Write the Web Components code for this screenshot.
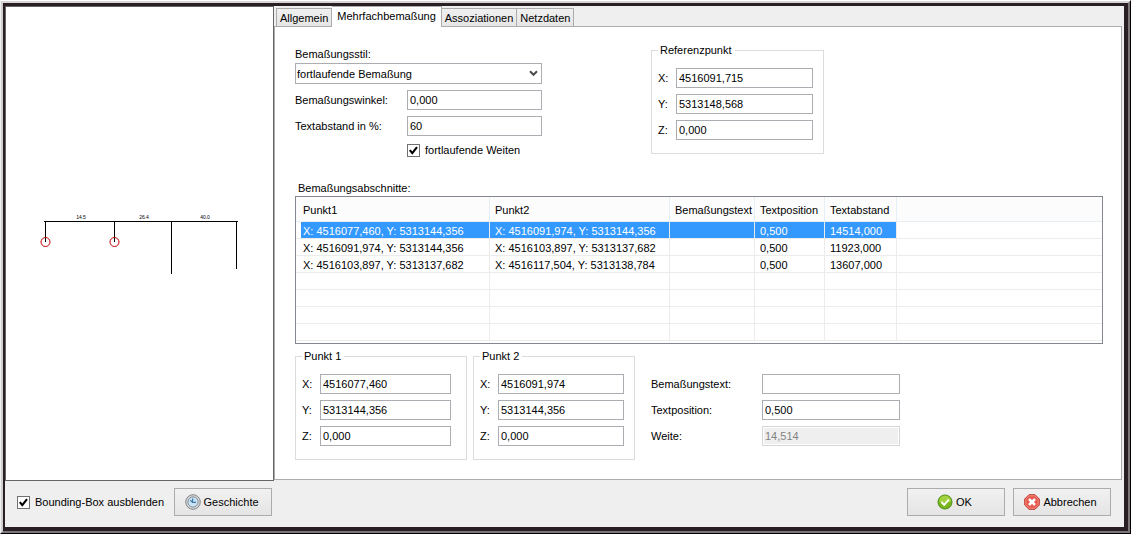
<!DOCTYPE html>
<html lang="de">
<head>
<meta charset="utf-8">
<title>Mehrfachbemaßung</title>
<style>
  html, body { margin: 0; }
  body {
    font: 11px/16px "Liberation Sans", Arial, sans-serif;
    color: #000;
    background: #fff;
    --face: #efefef;
    --line: #abadb3;
    --label: 18px;
    --inset: 10px;
    --gap: 8px;
  }
</style>
</head>
<body>
<dialog-window>
  <preview-pane slot="preview"></preview-pane>
  <tab-control slot="tabs"><dimension-page></dimension-page></tab-control>
  <check-field slot="left" label="Bounding-Box ausblenden"></check-field>
  <icon-button slot="left" icon="clock">Geschichte</icon-button>
  <icon-button slot="right" icon="ok">OK</icon-button>
  <icon-button slot="right" icon="cancel">Abbrechen</icon-button>
</dialog-window>

<script>
const define = (name, html, setup) => {
  const template = document.createElement('template');
  template.innerHTML = html;
  customElements.define(name, class extends HTMLElement {
    constructor() {
      super();
      this.attachShadow({ mode: 'open' });
    }
    connectedCallback() {
      if (this.shadowRoot.firstChild) return;
      this.shadowRoot.append(template.content.cloneNode(true));
      if (setup) setup(this, this.shadowRoot);
    }
  });
};

define('text-field', `
  <style>
    :host { display: block; }
    .row { display: grid; grid-template-columns: var(--label) minmax(0, 1fr); align-items: center; }
    input {
      box-sizing: border-box; width: 100%; height: 20px; margin: 0; padding: 0 2px;
      border: 1px solid var(--line); border-radius: 0; background: #fff;
      font: inherit; color: inherit;
    }
    input:disabled { border-color: #d6d6d6; background: #efefef; color: #838383; box-shadow: inset 0 0 0 1px #fff; }
  </style>
  <div class="row"><label for="field"></label><input id="field" type="text"></div>`,
  (host, root) => {
    root.querySelector('label').textContent = host.getAttribute('label');
    const input = root.querySelector('input');
    input.value = host.getAttribute('value') || '';
    input.disabled = host.hasAttribute('disabled');
  });

define('select-field', `
  <style>
    :host { display: block; }
    label { display: block; line-height: 18px; }
    .box { display: grid; align-items: center; }
    .box > * { grid-area: 1 / 1; }
    select {
      appearance: none; box-sizing: border-box; width: 100%; height: 21px; margin: 0; padding: 0 20px 0 1px;
      border: 1px solid var(--line); border-radius: 0; background: #fff; font: inherit; color: inherit;
    }
    svg { justify-self: end; margin-right: 4px; pointer-events: none; }
  </style>
  <label for="choice"></label>
  <div class="box">
    <select id="choice"><option>fortlaufende Bemaßung</option></select>
    <svg width="9" height="7" viewBox="0 0 9 7"><path d="M1 1.2 4.5 4.8 8 1.2" fill="none" stroke="#4c4c4c" stroke-width="2"/></svg>
  </div>`,
  (host, root) => { root.querySelector('label').textContent = host.getAttribute('label'); });

define('check-field', `
  <style>
    :host { display: block; }
    .row { display: flex; align-items: center; gap: 5px; }
    .box { display: grid; }
    .box > * { grid-area: 1 / 1; }
    input { appearance: none; box-sizing: border-box; width: 13px; height: 13px; margin: 0; border: 1px solid #707070; background: #fff; }
    svg { pointer-events: none; visibility: hidden; }
    input:checked + svg { visibility: visible; }
  </style>
  <div class="row">
    <span class="box"><input id="check" type="checkbox" checked>
      <svg width="13" height="13" viewBox="0 0 13 13"><path d="M2.8 6.2 5.3 9.2 10 3.2" fill="none" stroke="#000" stroke-width="2.1"/></svg></span>
    <label for="check"></label>
  </div>`,
  (host, root) => { root.querySelector('label').textContent = host.getAttribute('label'); });

define('group-box', `
  <style>
    :host { display: block; }
    fieldset { box-sizing: border-box; min-width: 0; height: 100%; margin: 0; padding: 10px var(--inset) 13px 6px; border: 1px solid #dcdcdc; }
    legend { margin: 0; padding: 0 3px 0 2px; line-height: 16px; }
    .stack { display: grid; gap: 6px; }
  </style>
  <fieldset><legend></legend><div class="stack"><slot></slot></div></fieldset>`,
  (host, root) => { root.querySelector('legend').textContent = host.getAttribute('label'); });

define('icon-button', `
  <style>
    :host { display: block; }
    button {
      box-sizing: border-box; width: 98px; height: 28px; margin: 0; padding: 0 3px 0 0;
      display: flex; align-items: center; justify-content: center; gap: 3px;
      border: 1px solid #acacac; border-radius: 0;
      background: linear-gradient(#f1f1f1, #e4e4e4); font: inherit; color: inherit;
    }
  </style>
  <button type="button"><svg width="16" height="16" viewBox="0 0 16 16"></svg><slot></slot></button>`,
  (host, root) => {
    const icons = {
      clock: `<circle cx="8" cy="8" r="7.3" fill="#d2d4d6" stroke="#85898d"/>
        <circle cx="8" cy="8" r="5.1" fill="#c9e2f4" stroke="#8b9299"/>
        <path d="M7.6 4.6V8.4H11M7.6 8.4 5.2 6.2" fill="none" stroke="#3f7ba8" stroke-width="1.2"/>`,
      ok: `<circle cx="8" cy="8" r="7" fill="#79b51c" stroke="#4d8a12"/>
        <path d="M2 7.5a6 6 0 0 1 12 0q-6 2.500-12 0z" fill="#a2d23f"/>
        <path d="M4.300 8 7.200 10.800 11.800 5.700" fill="none" stroke="#fff" stroke-width="2"/>`,
      cancel: `<path d="M5 .700H11L15.300 5V11L11 15.300H5L.700 11V5z" fill="#e8584c" stroke="#c23a32"/>
        <path d="M5.300 1.800H10.700L14.200 5.300V10.700L10.700 14.200H5.300L1.800 10.700V5.300z" fill="none" stroke="#f39a90" stroke-width=".8"/>
        <path d="M5 5 11 11M11 5 5 11" stroke="#fff" stroke-width="2.600"/>`
    };
    root.querySelector('svg').innerHTML = icons[host.getAttribute('icon')];
  });

define('preview-pane', `
  <style>
    :host { display: flex; align-items: center; justify-content: center; box-sizing: border-box; border: 1px solid #666; background: #fff; }
    text { font: 5px "Liberation Sans", Arial, sans-serif; text-anchor: middle; }
  </style>
  <svg width="200" height="64" viewBox="0 0 200 64" role="img" aria-label="Vorschau">
    <g stroke="#000" fill="none" shape-rendering="crispEdges">
      <path d="M4 9.500H198M5.500 9V30M74.500 9V30M131.500 9V62M196.500 9V57"/>
    </g>
    <g stroke="#c00000" fill="none"><circle cx="5.500" cy="30" r="4.500"/><circle cx="74.500" cy="30" r="4.500"/></g>
    <text x="41" y="7">14.5</text><text x="104" y="7">26.4</text><text x="165" y="7">40.0</text>
  </svg>`);

define('section-table', `
  <style>
    :host { display: block; box-sizing: border-box; border: 1px solid #828790; padding-bottom: 2px; background: #fff; }
    table { width: 100%; table-layout: fixed; border-collapse: separate; border-spacing: 0; }
    .c1 { width: 194px; } .c2 { width: 180px; } .c3 { width: 85px; } .c4 { width: 70px; } .c5 { width: 72px; }
    th, td { box-sizing: border-box; padding: 0 0 0 5px; border: 0 solid #ececec; border-width: 0 1px 1px 0; text-align: left; font-weight: normal; white-space: nowrap; overflow: hidden; }
    th { height: 25px; padding-top: 2px; background: #fcfcfc; border-color: #e5eff5; }
    td { height: 17px; padding-top: 2px; line-height: 14px; }
    th:first-child, td:first-child { padding-left: 7px; }
    th:last-child, td:last-child { border-right: 0; }
    .selected td:not(:last-child) { background: #39f; background-clip: padding-box; color: #fff; }
    .selected td:first-child:not(:last-child) { background: linear-gradient(90deg, #fff 5px, #39f 5px) padding-box; }
  </style>
  <table>
    <colgroup><col class="c1"><col class="c2"><col class="c3"><col class="c4"><col class="c5"><col></colgroup>
    <thead><tr><th>Punkt1</th><th>Punkt2</th><th>Bemaßungstext</th><th>Textposition</th><th>Textabstand</th><th></th></tr></thead>
    <tbody></tbody>
  </table>`,
  (host, root) => {
    const rows = [
      ['X: 4516077,460, Y: 5313144,356', 'X: 4516091,974, Y: 5313144,356', '', '0,500', '14514,000', ''],
      ['X: 4516091,974, Y: 5313144,356', 'X: 4516103,897, Y: 5313137,682', '', '0,500', '11923,000', ''],
      ['X: 4516103,897, Y: 5313137,682', 'X: 4516117,504, Y: 5313138,784', '', '0,500', '13607,000', '']
    ];
    while (rows.length < 7) rows.push(Array(6).fill(''));
    const body = root.querySelector('tbody');
    rows.forEach((cells, index) => {
      const tr = body.insertRow();
      if (index === 0) tr.className = 'selected';
      cells.forEach(text => { tr.insertCell().textContent = text; });
    });
  });

define('dimension-page', `
  <style>
    :host { display: block; padding: 15px 18px 19px 20px; }
    .top { display: grid; grid-template-columns: 249px 173px; column-gap: 107px; align-items: start; }
    .style { padding-top: 3px; }
    select-field { width: 247px; margin-bottom: 6px; }
    .fields { display: grid; gap: 6px; --label: 112px; }
    .fields text-field { width: 247px; }
    .fields check-field { padding-left: 112px; }
    .caption { padding: 0 3px; margin-top: 22px; }
    .bottom { display: grid; grid-template-columns: 172px 162px 259px; column-gap: 6px; margin-top: 4px; }
    .wide { --inset: 15px; }
    .details { display: grid; gap: 6px; align-content: start; padding: 26px 0 0 10px; --label: 111px; }
  </style>
  <div class="top">
    <div class="style">
      <select-field label="Bemaßungsstil:"></select-field>
      <div class="fields">
        <text-field label="Bemaßungswinkel:" value="0,000"></text-field>
        <text-field label="Textabstand in %:" value="60"></text-field>
        <check-field label="fortlaufende Weiten"></check-field>
      </div>
    </div>
    <group-box label="Referenzpunkt">
      <text-field label="X:" value="4516091,715"></text-field>
      <text-field label="Y:" value="5313148,568"></text-field>
      <text-field label="Z:" value="0,000"></text-field>
    </group-box>
  </div>
  <div class="caption">Bemaßungsabschnitte:</div>
  <section-table></section-table>
  <div class="bottom">
    <group-box class="wide" label="Punkt 1">
      <text-field label="X:" value="4516077,460"></text-field>
      <text-field label="Y:" value="5313144,356"></text-field>
      <text-field label="Z:" value="0,000"></text-field>
    </group-box>
    <group-box label="Punkt 2">
      <text-field label="X:" value="4516091,974"></text-field>
      <text-field label="Y:" value="5313144,356"></text-field>
      <text-field label="Z:" value="0,000"></text-field>
    </group-box>
    <div class="details">
      <text-field label="Bemaßungstext:" value=""></text-field>
      <text-field label="Textposition:" value="0,500"></text-field>
      <text-field label="Weite:" value="14,514" disabled></text-field>
    </div>
  </div>`);

define('tab-control', `
  <style>
    :host { display: flex; flex-direction: column; min-width: 0; background: var(--face); }
    .tabs { display: flex; align-items: flex-end; height: 20px; padding-left: 2px; }
    button {
      box-sizing: border-box; height: 18px; margin: 0; padding: 0 3px; font: inherit; color: inherit; white-space: nowrap;
      border: 1px solid #acacac; border-bottom: 0; border-radius: 0; background: linear-gradient(#f0f0f0, #e6e6e6);
    }
    button + button { border-left: 0; }
    button[aria-selected="true"] { position: relative; height: 21px; margin-bottom: -1px; padding: 0 5px 2px; background: #fff; }
    .page { flex: 1; box-sizing: border-box; margin-right: 2px; border: 1px solid #acacac; background: #fff; }
  </style>
  <div class="tabs" role="tablist">
    <button type="button" role="tab" aria-selected="false">Allgemein</button>
    <button type="button" role="tab" aria-selected="true">Mehrfachbemaßung</button>
    <button type="button" role="tab" aria-selected="false">Assoziationen</button>
    <button type="button" role="tab" aria-selected="false">Netzdaten</button>
  </div>
  <div class="page" role="tabpanel"><slot></slot></div>`);

define('dialog-window', `
  <style>
    :host { display: flex; box-sizing: border-box; min-height: 100vh; border: 1px solid; border-color: #fff #000 #000 #f0f0f0; }
    .bevel { flex: 1; min-width: 0; display: flex; border: 2px solid; border-color: #d6d6d6 #7c757a #7c757a #d0d0d0; }
    .frame { flex: 1; min-width: 0; display: flex; flex-direction: column; border: solid #281e23; border-width: 3px 4px 4px 2px; background: var(--face); }
    .main { flex: 1; display: grid; grid-template-columns: 269px minmax(0, 1fr); }
    .main slot[name="tabs"]::slotted(*) { margin-bottom: 1px; }
    footer { display: flex; justify-content: space-between; align-items: flex-start; padding: 7px 13px 11px 12px; }
    .group { display: flex; align-items: center; gap: var(--gap); }
    .first { gap: 10px; }
  </style>
  <div class="bevel"><div class="frame">
    <div class="main"><slot name="preview"></slot><slot name="tabs"></slot></div>
    <footer><div class="group first"><slot name="left"></slot></div><div class="group"><slot name="right"></slot></div></footer>
  </div></div>`);
</script>
</body>
</html>
